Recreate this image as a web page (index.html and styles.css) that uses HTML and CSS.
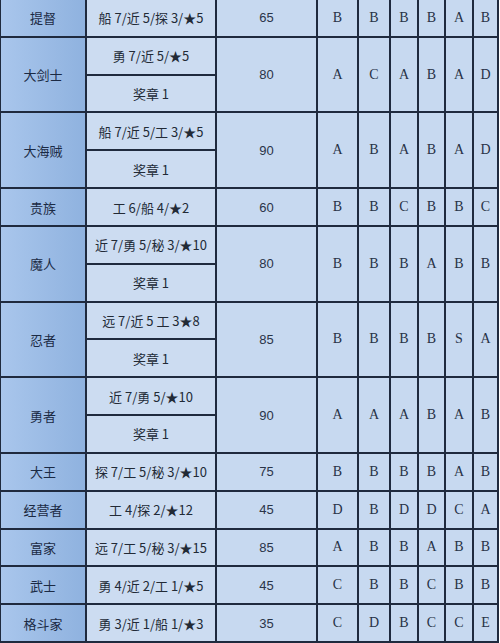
FILE: index.html
```html
<!DOCTYPE html>
<html lang="zh">
<head>
<meta charset="utf-8">
<title>职业表</title>
<link rel="stylesheet" href="styles.css">
</head>
<body>
<div class="grid">
  <div class="name">提督</div><div class="req">船 7/近 5/探 3/★5</div><div class="num">65</div><div class="g">B</div><div class="g">B</div><div class="g">B</div><div class="g">B</div><div class="g">A</div><div class="g">B</div>

  <div class="name s2">大剑士</div><div class="req">勇 7/近 5/★5</div><div class="num s2">80</div><div class="g s2">A</div><div class="g s2">C</div><div class="g s2">A</div><div class="g s2">B</div><div class="g s2">A</div><div class="g s2">D</div><div class="req">奖章 1</div>

  <div class="name s2">大海贼</div><div class="req">船 7/近 5/工 3/★5</div><div class="num s2">90</div><div class="g s2">A</div><div class="g s2">B</div><div class="g s2">A</div><div class="g s2">B</div><div class="g s2">A</div><div class="g s2">D</div><div class="req">奖章 1</div>

  <div class="name">贵族</div><div class="req">工 6/船 4/★2</div><div class="num">60</div><div class="g">B</div><div class="g">B</div><div class="g">C</div><div class="g">B</div><div class="g">B</div><div class="g">C</div>

  <div class="name s2">魔人</div><div class="req">近 7/勇 5/秘 3/★10</div><div class="num s2">80</div><div class="g s2">B</div><div class="g s2">B</div><div class="g s2">B</div><div class="g s2">A</div><div class="g s2">B</div><div class="g s2">B</div><div class="req">奖章 1</div>

  <div class="name s2">忍者</div><div class="req">远 7/近 5 工 3★8</div><div class="num s2">85</div><div class="g s2">B</div><div class="g s2">B</div><div class="g s2">B</div><div class="g s2">B</div><div class="g s2">S</div><div class="g s2">A</div><div class="req">奖章 1</div>

  <div class="name s2">勇者</div><div class="req">近 7/勇 5/★10</div><div class="num s2">90</div><div class="g s2">A</div><div class="g s2">A</div><div class="g s2">A</div><div class="g s2">B</div><div class="g s2">A</div><div class="g s2">B</div><div class="req">奖章 1</div>

  <div class="name">大王</div><div class="req">探 7/工 5/秘 3/★10</div><div class="num">75</div><div class="g">B</div><div class="g">B</div><div class="g">B</div><div class="g">B</div><div class="g">A</div><div class="g">B</div>

  <div class="name">经营者</div><div class="req">工 4/探 2/★12</div><div class="num">45</div><div class="g">D</div><div class="g">B</div><div class="g">D</div><div class="g">D</div><div class="g">C</div><div class="g">A</div>

  <div class="name">富家</div><div class="req">远 7/工 5/秘 3/★15</div><div class="num">85</div><div class="g">A</div><div class="g">B</div><div class="g">B</div><div class="g">A</div><div class="g">B</div><div class="g">B</div>

  <div class="name">武士</div><div class="req">勇 4/近 2/工 1/★5</div><div class="num">45</div><div class="g">C</div><div class="g">B</div><div class="g">B</div><div class="g">C</div><div class="g">B</div><div class="g">B</div>

  <div class="name">格斗家</div><div class="req">勇 3/近 1/船 1/★3</div><div class="num">35</div><div class="g">C</div><div class="g">D</div><div class="g">B</div><div class="g">C</div><div class="g">C</div><div class="g">E</div>
</div>
</body>
</html>
```

FILE: styles.css
```css
html, body {
  margin: 0;
  padding: 0;
  background: #ffffff;
}

.grid {
  box-sizing: border-box;
  width: 499px;
  height: 643px;
  padding: 0 2px 2px 1px;
  background: #1f2a3e;
  display: grid;
  grid-template-columns: 84px 128px 99px 39px 30px 26px 25px 26px 23px;
  grid-template-rows: repeat(17, 1fr);
  gap: 2px;
  font-family: "Noto Sans CJK SC", "Noto Sans", sans-serif;
  font-size: 13px;
  color: #1f2b3f;
}

.grid > div {
  display: flex;
  align-items: center;
  justify-content: center;
  background: #c7d9f0;
  white-space: nowrap;
  overflow: hidden;
}

.grid > .name {
  grid-column: 1;
  background: linear-gradient(to right, #a9c6ec, #8fb2df);
  color: #1b2a44;
}

.grid > .req {
  background: #ccdcf1;
  color: #222a36;
}

.grid > .num {
  font-family: "Liberation Sans", Arial, sans-serif;
  font-size: 13px;
  color: #2a3448;
}

.grid > .g {
  font-family: "Liberation Serif", "Times New Roman", serif;
  font-size: 14px;
  color: #283246;
}

.s2 {
  grid-row: span 2;
}
```
